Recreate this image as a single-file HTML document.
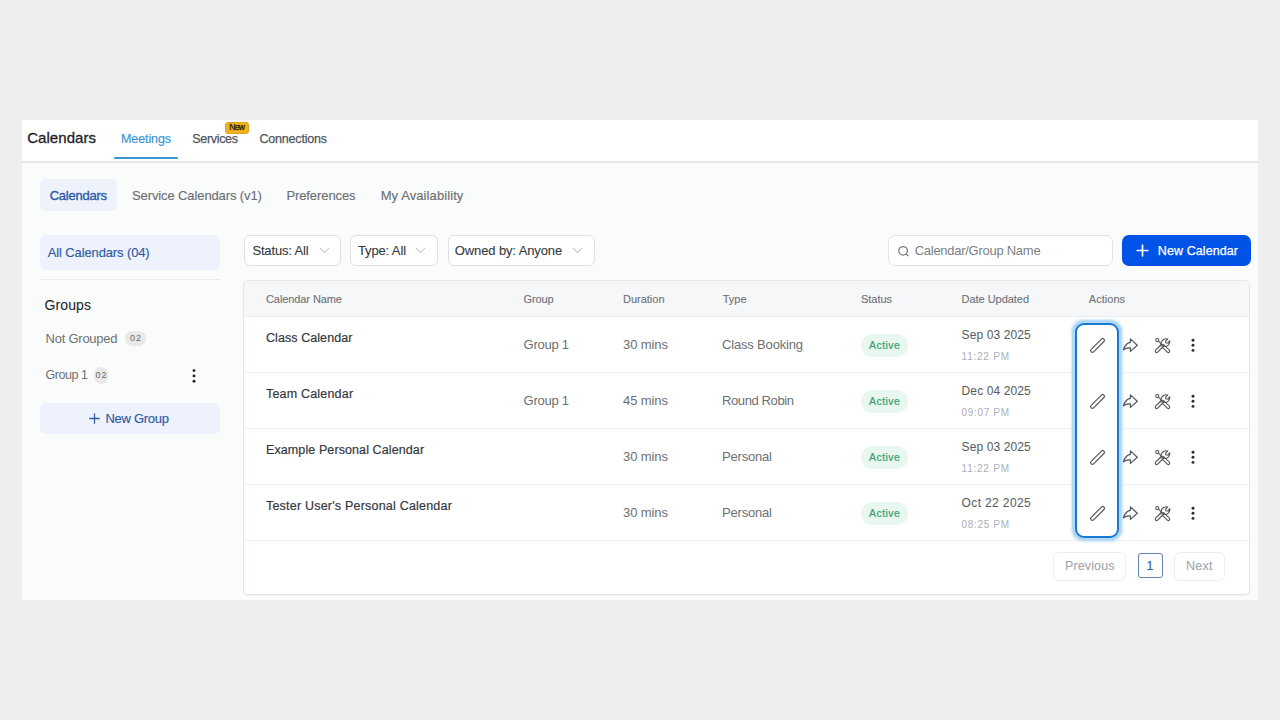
<!DOCTYPE html>
<html><head><meta charset="utf-8"><style>
html,body{margin:0;padding:0;}
body{width:1280px;height:720px;background:#eeeeee;position:relative;overflow:hidden;font-family:"Liberation Sans",sans-serif;}
.t{position:absolute;white-space:nowrap;line-height:1;}
</style></head><body>
<div style="position:absolute;left:22px;top:120px;width:1236px;height:41px;background:#fff"></div>
<div style="position:absolute;left:22px;top:161px;width:1236px;height:2px;background:#e7e9e9"></div>
<div style="position:absolute;left:22px;top:163px;width:1236px;height:437px;background:#fafcfc"></div>
<div class="t" style="left:27.2px;top:129.8px;font-size:15px;letter-spacing:0.05px;color:#1d2125;-webkit-text-stroke:0.3px #1d2125;">Calendars</div>
<div class="t" style="left:121.0px;top:133.0px;font-size:12.5px;letter-spacing:-0.10px;color:#3d96d4;-webkit-text-stroke:0.2px #3d96d4;">Meetings</div>
<div style="position:absolute;left:114px;top:156.5px;width:64px;height:2px;background:#3f97d0;border-radius:1px"></div>
<div class="t" style="left:192.3px;top:133.0px;font-size:12.5px;letter-spacing:-0.32px;color:#50555b;-webkit-text-stroke:0.25px #50555b;">Services</div>
<div class="t" style="left:259.5px;top:133.0px;font-size:12.5px;letter-spacing:-0.20px;color:#50555b;-webkit-text-stroke:0.25px #50555b;">Connections</div>
<div style="position:absolute;left:224.6px;top:122.2px;width:24.3px;height:11.4px;box-sizing:border-box;background:#f3b11e;border:0.6px solid #e2a315;border-radius:3px"></div>
<div class="t" style="left:229.3px;top:123.0px;font-size:8.5px;letter-spacing:-0.65px;color:#2a1f04;-webkit-text-stroke:0.3px #2a1f04;">New</div>
<div style="position:absolute;left:40px;top:178.5px;width:77px;height:32px;background:#edf2fb;border-radius:5px"></div>
<div class="t" style="left:49.7px;top:188.8px;font-size:13.0px;letter-spacing:-0.24px;color:#2b5aa8;-webkit-text-stroke:0.35px #2b5aa8;">Calendars</div>
<div class="t" style="left:132.0px;top:188.8px;font-size:13.0px;letter-spacing:-0.11px;color:#6c6f73;-webkit-text-stroke:0.15px #6c6f73;">Service Calendars (v1)</div>
<div class="t" style="left:286.4px;top:188.8px;font-size:13.0px;letter-spacing:-0.09px;color:#6c6f73;-webkit-text-stroke:0.15px #6c6f73;">Preferences</div>
<div class="t" style="left:380.7px;top:188.8px;font-size:13.0px;letter-spacing:0.09px;color:#6c6f73;-webkit-text-stroke:0.15px #6c6f73;">My Availability</div>
<div style="position:absolute;left:40px;top:235px;width:180px;height:35px;background:#edf2fc;border-radius:6px"></div>
<div class="t" style="left:47.7px;top:246.3px;font-size:13.0px;letter-spacing:-0.12px;color:#2d5aa3;-webkit-text-stroke:0.15px #2d5aa3;">All Calendars (04)</div>
<div style="position:absolute;left:40px;top:279px;width:180px;height:1px;background:#e9ebee"></div>
<div class="t" style="left:44.6px;top:297.6px;font-size:14px;letter-spacing:0.10px;color:#222528;-webkit-text-stroke:0.05px #222528;">Groups</div>
<div class="t" style="left:45.6px;top:332.3px;font-size:13.0px;letter-spacing:-0.25px;color:#6e7174;">Not Grouped</div>
<div style="position:absolute;left:125px;top:331px;width:21px;height:15px;background:#e9e9ea;border-radius:7px"></div>
<div class="t" style="left:130.0px;top:334.2px;font-size:9px;letter-spacing:0.99px;color:#6a6a6a;">02</div>
<div class="t" style="left:45.6px;top:369.4px;font-size:12.5px;letter-spacing:-0.46px;color:#6e7174;">Group 1</div>
<div style="position:absolute;left:94px;top:367px;width:14px;height:17px;background:#e9e9ea;border-radius:7px"></div>
<div class="t" style="left:95.5px;top:370.9px;font-size:9px;letter-spacing:0.99px;color:#6a6a6a;">02</div>
<svg style="position:absolute;left:188.5px;top:366px" width="10" height="20" viewBox="0 0 10 20"><circle cx="5" cy="4.6" r="1.45" fill="#222"/><circle cx="5" cy="9.9" r="1.45" fill="#222"/><circle cx="5" cy="15.2" r="1.45" fill="#222"/></svg>
<div style="position:absolute;left:40px;top:403px;width:180px;height:31px;background:#edf2fc;border-radius:6px"></div>
<svg style="position:absolute;left:89px;top:412.5px" width="11" height="11" viewBox="0 0 11 11"><path d="M5.5 0.8 V10.2 M0.8 5.5 H10.2" stroke="#2d5aa3" stroke-width="1.3" stroke-linecap="round"/></svg>
<div class="t" style="left:105.4px;top:412.3px;font-size:13.0px;letter-spacing:-0.27px;color:#2d5aa3;-webkit-text-stroke:0.15px #2d5aa3;">New Group</div>
<div style="position:absolute;left:244px;top:235px;width:96.5px;height:31px;box-sizing:border-box;background:#fff;border:1px solid #dfe1e4;border-radius:6px"></div>
<div class="t" style="left:252.4px;top:244.0px;font-size:13.0px;letter-spacing:-0.16px;color:#363a3e;-webkit-text-stroke:0.1px #363a3e;">Status: All</div>
<svg style="position:absolute;left:318.8px;top:246.8px" width="11" height="7" viewBox="0 0 11 7"><path d="M1 1 L5.5 5.5 L10 1" fill="none" stroke="#bbbec2" stroke-width="1.05"/></svg>
<div style="position:absolute;left:350px;top:235px;width:87.5px;height:31px;box-sizing:border-box;background:#fff;border:1px solid #dfe1e4;border-radius:6px"></div>
<div class="t" style="left:358.0px;top:244.0px;font-size:13.0px;letter-spacing:-0.14px;color:#363a3e;-webkit-text-stroke:0.1px #363a3e;">Type: All</div>
<svg style="position:absolute;left:415.3px;top:246.8px" width="11" height="7" viewBox="0 0 11 7"><path d="M1 1 L5.5 5.5 L10 1" fill="none" stroke="#bbbec2" stroke-width="1.05"/></svg>
<div style="position:absolute;left:447.5px;top:235px;width:147.0px;height:31px;box-sizing:border-box;background:#fff;border:1px solid #dfe1e4;border-radius:6px"></div>
<div class="t" style="left:454.8px;top:244.0px;font-size:13.0px;letter-spacing:-0.12px;color:#363a3e;-webkit-text-stroke:0.1px #363a3e;">Owned by: Anyone</div>
<svg style="position:absolute;left:572.3px;top:246.8px" width="11" height="7" viewBox="0 0 11 7"><path d="M1 1 L5.5 5.5 L10 1" fill="none" stroke="#bbbec2" stroke-width="1.05"/></svg>
<div style="position:absolute;left:887.5px;top:235px;width:225.5px;height:31px;box-sizing:border-box;background:#fff;border:1px solid #e1e3e6;border-radius:7px"></div>
<svg style="position:absolute;left:896px;top:243.5px" width="15" height="15" viewBox="0 0 15 15"><circle cx="7.1" cy="6.8" r="4.3" fill="none" stroke="#76797e" stroke-width="1.25"/><path d="M10.2 9.9 L12 11.7" stroke="#76797e" stroke-width="1.25" stroke-linecap="round"/></svg>
<div class="t" style="left:914.7px;top:244.0px;font-size:13.0px;letter-spacing:-0.27px;color:#7b7f84;">Calendar/Group Name</div>
<div style="position:absolute;left:1121.5px;top:235px;width:129.0px;height:31px;box-sizing:border-box;background:#0152e6;border-radius:7px"></div>
<svg style="position:absolute;left:1136px;top:244px" width="13" height="13" viewBox="0 0 13 13"><path d="M6.5 1.2 V11.8 M1.2 6.5 H11.8" stroke="#fff" stroke-width="1.7" stroke-linecap="round"/></svg>
<div class="t" style="left:1157.8px;top:245.0px;font-size:12.5px;letter-spacing:0.09px;color:#ffffff;-webkit-text-stroke:0.25px #fff;">New Calendar</div>
<div style="position:absolute;left:243px;top:280px;width:1007px;height:315px;box-sizing:border-box;background:#fff;border:1px solid #e6e7e9;border-radius:5px;box-shadow:0 1px 1px rgba(0,0,0,0.03)"></div>
<div style="position:absolute;left:244px;top:281px;width:1005px;height:35px;background:#f6f7f9;border-radius:4px 4px 0 0"></div>
<div style="position:absolute;left:244px;top:316px;width:1005px;height:1px;background:#ebecee"></div>
<div class="t" style="left:266.0px;top:294.3px;font-size:11.0px;letter-spacing:-0.09px;color:#6d7176;-webkit-text-stroke:0.1px #6d7176;">Calendar Name</div>
<div class="t" style="left:523.6px;top:294.3px;font-size:11.0px;letter-spacing:-0.14px;color:#6d7176;-webkit-text-stroke:0.1px #6d7176;">Group</div>
<div class="t" style="left:623.0px;top:294.3px;font-size:11.0px;letter-spacing:-0.01px;color:#6d7176;-webkit-text-stroke:0.1px #6d7176;">Duration</div>
<div class="t" style="left:722.8px;top:294.3px;font-size:11.0px;letter-spacing:-0.05px;color:#6d7176;-webkit-text-stroke:0.1px #6d7176;">Type</div>
<div class="t" style="left:861.0px;top:294.3px;font-size:11.0px;letter-spacing:-0.04px;color:#6d7176;-webkit-text-stroke:0.1px #6d7176;">Status</div>
<div class="t" style="left:961.6px;top:294.3px;font-size:11.0px;letter-spacing:-0.04px;color:#6d7176;-webkit-text-stroke:0.1px #6d7176;">Date Updated</div>
<div class="t" style="left:1088.8px;top:294.3px;font-size:11.0px;letter-spacing:0.03px;color:#6d7176;-webkit-text-stroke:0.1px #6d7176;">Actions</div>
<div style="position:absolute;left:244px;top:372px;width:1005px;height:1px;background:#f0f1f2"></div>
<div style="position:absolute;left:244px;top:428px;width:1005px;height:1px;background:#f0f1f2"></div>
<div style="position:absolute;left:244px;top:484px;width:1005px;height:1px;background:#f0f1f2"></div>
<div style="position:absolute;left:244px;top:540px;width:1005px;height:1px;background:#f0f1f2"></div>
<div style="position:absolute;left:1075px;top:323px;width:44px;height:215px;box-sizing:border-box;background:#fff;border:2.2px solid #1779d2;border-radius:9px;box-shadow:0 0 0 2.8px #b3d8f6, 0 0 2px 3.4px rgba(160,208,244,0.5)"></div>
<div class="t" style="left:266.0px;top:331.7px;font-size:12.5px;letter-spacing:0.07px;color:#35393e;-webkit-text-stroke:0.2px #35393e;">Class Calendar</div>
<div class="t" style="left:523.6px;top:338.0px;font-size:13.0px;letter-spacing:-0.26px;color:#6c7075;">Group 1</div>
<div class="t" style="left:623.0px;top:338.0px;font-size:13.0px;letter-spacing:-0.09px;color:#6c7075;">30 mins</div>
<div class="t" style="left:722.0px;top:338.0px;font-size:13.0px;letter-spacing:-0.17px;color:#6c7075;">Class Booking</div>
<div style="position:absolute;left:861px;top:334px;width:47px;height:23px;background:#e8f7ef;border-radius:11.5px"></div>
<div class="t" style="left:869.0px;top:340.3px;font-size:10.5px;letter-spacing:0.44px;color:#35a06f;-webkit-text-stroke:0.2px #35a06f;">Active</div>
<div class="t" style="left:961.6px;top:329.4px;font-size:12px;letter-spacing:0.10px;color:#5a5e63;-webkit-text-stroke:0.05px #5a5e63;">Sep 03 2025</div>
<div class="t" style="left:961.6px;top:351.9px;font-size:10.0px;letter-spacing:0.76px;color:#acb0b5;">11:22 PM</div>
<svg style="position:absolute;left:1088px;top:336px" width="19" height="19" viewBox="0 0 19 19"><path d="M4.4 14.6 L14.7 4.3" stroke="#55595e" stroke-width="4.7" stroke-linecap="round"/><path d="M4.4 14.6 L14.7 4.3" stroke="#fff" stroke-width="2.3" stroke-linecap="round"/></svg>
<svg style="position:absolute;left:1122px;top:337px" width="17" height="16" viewBox="0 0 17 16"><path d="M15.3 8.2 L8.4 1.9 L8.4 5.4 Q3.2 6.2 1.5 12.9 Q3.6 10.6 8.4 10.9 L8.4 14.4 Z" fill="none" stroke="#55595e" stroke-width="1.25" stroke-linejoin="round"/></svg>
<svg style="position:absolute;left:1152px;top:334.5px" width="20" height="20" viewBox="0 0 20 20"><g fill="none" stroke-linecap="round" transform="translate(10.4 10.2) scale(0.9) translate(-10 -10)"><path d="M11.2 11.2 L16.6 16.6" stroke="#55595e" stroke-width="4.4"/><path d="M11.2 11.2 L16.6 16.6" stroke="#fff" stroke-width="1.9"/><path d="M3.6 16.6 L9.6 10.6" stroke="#55595e" stroke-width="4.4"/><path d="M3.6 16.6 L9.6 10.6" stroke="#fff" stroke-width="1.9"/><path d="M5.6 5.6 L10.6 10.6" stroke="#55595e" stroke-width="1.2"/><circle cx="4.3" cy="4.3" r="1.7" fill="#fff" stroke="#55595e" stroke-width="1.25"/><path d="M8.6 11.2 Q7.6 6.2 11.2 3.6 Q13.6 2.2 16 3.2 L13.4 5.6 L14.2 7.6 L16.6 7.4 L18.1 4.8 Q18.8 8 16.4 10.2 Q13.8 12 10.8 11.2" stroke="#55595e" stroke-width="1.25" stroke-linejoin="round"/></g></svg>
<svg style="position:absolute;left:1188px;top:336px" width="10" height="18" viewBox="0 0 10 18"><circle cx="5" cy="4.3" r="1.45" fill="#2a2d31"/><circle cx="5" cy="9.3" r="1.45" fill="#2a2d31"/><circle cx="5" cy="14.4" r="1.45" fill="#2a2d31"/></svg>
<div class="t" style="left:266.0px;top:387.7px;font-size:12.5px;letter-spacing:0.19px;color:#35393e;-webkit-text-stroke:0.2px #35393e;">Team Calendar</div>
<div class="t" style="left:523.6px;top:394.0px;font-size:13.0px;letter-spacing:-0.26px;color:#6c7075;">Group 1</div>
<div class="t" style="left:623.0px;top:394.0px;font-size:13.0px;letter-spacing:-0.09px;color:#6c7075;">45 mins</div>
<div class="t" style="left:722.0px;top:394.0px;font-size:13.0px;letter-spacing:-0.39px;color:#6c7075;">Round Robin</div>
<div style="position:absolute;left:861px;top:390px;width:47px;height:23px;background:#e8f7ef;border-radius:11.5px"></div>
<div class="t" style="left:869.0px;top:396.3px;font-size:10.5px;letter-spacing:0.44px;color:#35a06f;-webkit-text-stroke:0.2px #35a06f;">Active</div>
<div class="t" style="left:961.6px;top:385.4px;font-size:12px;letter-spacing:0.10px;color:#5a5e63;-webkit-text-stroke:0.05px #5a5e63;">Dec 04 2025</div>
<div class="t" style="left:961.6px;top:407.9px;font-size:10.0px;letter-spacing:0.66px;color:#acb0b5;">09:07 PM</div>
<svg style="position:absolute;left:1088px;top:392px" width="19" height="19" viewBox="0 0 19 19"><path d="M4.4 14.6 L14.7 4.3" stroke="#55595e" stroke-width="4.7" stroke-linecap="round"/><path d="M4.4 14.6 L14.7 4.3" stroke="#fff" stroke-width="2.3" stroke-linecap="round"/></svg>
<svg style="position:absolute;left:1122px;top:393px" width="17" height="16" viewBox="0 0 17 16"><path d="M15.3 8.2 L8.4 1.9 L8.4 5.4 Q3.2 6.2 1.5 12.9 Q3.6 10.6 8.4 10.9 L8.4 14.4 Z" fill="none" stroke="#55595e" stroke-width="1.25" stroke-linejoin="round"/></svg>
<svg style="position:absolute;left:1152px;top:390.5px" width="20" height="20" viewBox="0 0 20 20"><g fill="none" stroke-linecap="round" transform="translate(10.4 10.2) scale(0.9) translate(-10 -10)"><path d="M11.2 11.2 L16.6 16.6" stroke="#55595e" stroke-width="4.4"/><path d="M11.2 11.2 L16.6 16.6" stroke="#fff" stroke-width="1.9"/><path d="M3.6 16.6 L9.6 10.6" stroke="#55595e" stroke-width="4.4"/><path d="M3.6 16.6 L9.6 10.6" stroke="#fff" stroke-width="1.9"/><path d="M5.6 5.6 L10.6 10.6" stroke="#55595e" stroke-width="1.2"/><circle cx="4.3" cy="4.3" r="1.7" fill="#fff" stroke="#55595e" stroke-width="1.25"/><path d="M8.6 11.2 Q7.6 6.2 11.2 3.6 Q13.6 2.2 16 3.2 L13.4 5.6 L14.2 7.6 L16.6 7.4 L18.1 4.8 Q18.8 8 16.4 10.2 Q13.8 12 10.8 11.2" stroke="#55595e" stroke-width="1.25" stroke-linejoin="round"/></g></svg>
<svg style="position:absolute;left:1188px;top:392px" width="10" height="18" viewBox="0 0 10 18"><circle cx="5" cy="4.3" r="1.45" fill="#2a2d31"/><circle cx="5" cy="9.3" r="1.45" fill="#2a2d31"/><circle cx="5" cy="14.4" r="1.45" fill="#2a2d31"/></svg>
<div class="t" style="left:266.0px;top:443.7px;font-size:12.5px;letter-spacing:0.10px;color:#35393e;-webkit-text-stroke:0.2px #35393e;">Example Personal Calendar</div>
<div class="t" style="left:623.0px;top:450.0px;font-size:13.0px;letter-spacing:-0.09px;color:#6c7075;">30 mins</div>
<div class="t" style="left:722.0px;top:450.0px;font-size:13.0px;letter-spacing:-0.19px;color:#6c7075;">Personal</div>
<div style="position:absolute;left:861px;top:446px;width:47px;height:23px;background:#e8f7ef;border-radius:11.5px"></div>
<div class="t" style="left:869.0px;top:452.3px;font-size:10.5px;letter-spacing:0.44px;color:#35a06f;-webkit-text-stroke:0.2px #35a06f;">Active</div>
<div class="t" style="left:961.6px;top:441.4px;font-size:12px;letter-spacing:0.10px;color:#5a5e63;-webkit-text-stroke:0.05px #5a5e63;">Sep 03 2025</div>
<div class="t" style="left:961.6px;top:463.9px;font-size:10.0px;letter-spacing:0.76px;color:#acb0b5;">11:22 PM</div>
<svg style="position:absolute;left:1088px;top:448px" width="19" height="19" viewBox="0 0 19 19"><path d="M4.4 14.6 L14.7 4.3" stroke="#55595e" stroke-width="4.7" stroke-linecap="round"/><path d="M4.4 14.6 L14.7 4.3" stroke="#fff" stroke-width="2.3" stroke-linecap="round"/></svg>
<svg style="position:absolute;left:1122px;top:449px" width="17" height="16" viewBox="0 0 17 16"><path d="M15.3 8.2 L8.4 1.9 L8.4 5.4 Q3.2 6.2 1.5 12.9 Q3.6 10.6 8.4 10.9 L8.4 14.4 Z" fill="none" stroke="#55595e" stroke-width="1.25" stroke-linejoin="round"/></svg>
<svg style="position:absolute;left:1152px;top:446.5px" width="20" height="20" viewBox="0 0 20 20"><g fill="none" stroke-linecap="round" transform="translate(10.4 10.2) scale(0.9) translate(-10 -10)"><path d="M11.2 11.2 L16.6 16.6" stroke="#55595e" stroke-width="4.4"/><path d="M11.2 11.2 L16.6 16.6" stroke="#fff" stroke-width="1.9"/><path d="M3.6 16.6 L9.6 10.6" stroke="#55595e" stroke-width="4.4"/><path d="M3.6 16.6 L9.6 10.6" stroke="#fff" stroke-width="1.9"/><path d="M5.6 5.6 L10.6 10.6" stroke="#55595e" stroke-width="1.2"/><circle cx="4.3" cy="4.3" r="1.7" fill="#fff" stroke="#55595e" stroke-width="1.25"/><path d="M8.6 11.2 Q7.6 6.2 11.2 3.6 Q13.6 2.2 16 3.2 L13.4 5.6 L14.2 7.6 L16.6 7.4 L18.1 4.8 Q18.8 8 16.4 10.2 Q13.8 12 10.8 11.2" stroke="#55595e" stroke-width="1.25" stroke-linejoin="round"/></g></svg>
<svg style="position:absolute;left:1188px;top:448px" width="10" height="18" viewBox="0 0 10 18"><circle cx="5" cy="4.3" r="1.45" fill="#2a2d31"/><circle cx="5" cy="9.3" r="1.45" fill="#2a2d31"/><circle cx="5" cy="14.4" r="1.45" fill="#2a2d31"/></svg>
<div class="t" style="left:266.0px;top:499.7px;font-size:12.5px;letter-spacing:0.21px;color:#35393e;-webkit-text-stroke:0.2px #35393e;">Tester User's Personal Calendar</div>
<div class="t" style="left:623.0px;top:506.0px;font-size:13.0px;letter-spacing:-0.09px;color:#6c7075;">30 mins</div>
<div class="t" style="left:722.0px;top:506.0px;font-size:13.0px;letter-spacing:-0.19px;color:#6c7075;">Personal</div>
<div style="position:absolute;left:861px;top:502px;width:47px;height:23px;background:#e8f7ef;border-radius:11.5px"></div>
<div class="t" style="left:869.0px;top:508.3px;font-size:10.5px;letter-spacing:0.44px;color:#35a06f;-webkit-text-stroke:0.2px #35a06f;">Active</div>
<div class="t" style="left:961.6px;top:497.4px;font-size:12px;letter-spacing:0.37px;color:#5a5e63;-webkit-text-stroke:0.05px #5a5e63;">Oct 22 2025</div>
<div class="t" style="left:961.6px;top:519.9px;font-size:10.0px;letter-spacing:0.66px;color:#acb0b5;">08:25 PM</div>
<svg style="position:absolute;left:1088px;top:504px" width="19" height="19" viewBox="0 0 19 19"><path d="M4.4 14.6 L14.7 4.3" stroke="#55595e" stroke-width="4.7" stroke-linecap="round"/><path d="M4.4 14.6 L14.7 4.3" stroke="#fff" stroke-width="2.3" stroke-linecap="round"/></svg>
<svg style="position:absolute;left:1122px;top:505px" width="17" height="16" viewBox="0 0 17 16"><path d="M15.3 8.2 L8.4 1.9 L8.4 5.4 Q3.2 6.2 1.5 12.9 Q3.6 10.6 8.4 10.9 L8.4 14.4 Z" fill="none" stroke="#55595e" stroke-width="1.25" stroke-linejoin="round"/></svg>
<svg style="position:absolute;left:1152px;top:502.5px" width="20" height="20" viewBox="0 0 20 20"><g fill="none" stroke-linecap="round" transform="translate(10.4 10.2) scale(0.9) translate(-10 -10)"><path d="M11.2 11.2 L16.6 16.6" stroke="#55595e" stroke-width="4.4"/><path d="M11.2 11.2 L16.6 16.6" stroke="#fff" stroke-width="1.9"/><path d="M3.6 16.6 L9.6 10.6" stroke="#55595e" stroke-width="4.4"/><path d="M3.6 16.6 L9.6 10.6" stroke="#fff" stroke-width="1.9"/><path d="M5.6 5.6 L10.6 10.6" stroke="#55595e" stroke-width="1.2"/><circle cx="4.3" cy="4.3" r="1.7" fill="#fff" stroke="#55595e" stroke-width="1.25"/><path d="M8.6 11.2 Q7.6 6.2 11.2 3.6 Q13.6 2.2 16 3.2 L13.4 5.6 L14.2 7.6 L16.6 7.4 L18.1 4.8 Q18.8 8 16.4 10.2 Q13.8 12 10.8 11.2" stroke="#55595e" stroke-width="1.25" stroke-linejoin="round"/></g></svg>
<svg style="position:absolute;left:1188px;top:504px" width="10" height="18" viewBox="0 0 10 18"><circle cx="5" cy="4.3" r="1.45" fill="#2a2d31"/><circle cx="5" cy="9.3" r="1.45" fill="#2a2d31"/><circle cx="5" cy="14.4" r="1.45" fill="#2a2d31"/></svg>
<div style="position:absolute;left:1053px;top:551.5px;width:73px;height:29.0px;box-sizing:border-box;background:#fff;border:1px solid #eceef0;border-radius:6px"></div>
<div class="t" style="left:1065.0px;top:559.8px;font-size:12.5px;letter-spacing:0.12px;color:#a2a6ab;-webkit-text-stroke:0.1px #a2a6ab;">Previous</div>
<div style="position:absolute;left:1138px;top:553px;width:24.5px;height:25px;box-sizing:border-box;background:#fff;border:1.3px solid #6282ad;border-radius:3px"></div>
<div class="t" style="left:1146.5px;top:559.6px;font-size:12.5px;letter-spacing:-0.45px;color:#3a62a6;-webkit-text-stroke:0.2px #3a62a6;">1</div>
<div style="position:absolute;left:1174px;top:551.5px;width:50.5px;height:29.0px;box-sizing:border-box;background:#fff;border:1px solid #eceef0;border-radius:6px"></div>
<div class="t" style="left:1186.0px;top:559.8px;font-size:12.5px;letter-spacing:0.27px;color:#a2a6ab;-webkit-text-stroke:0.1px #a2a6ab;">Next</div>
</body></html>
